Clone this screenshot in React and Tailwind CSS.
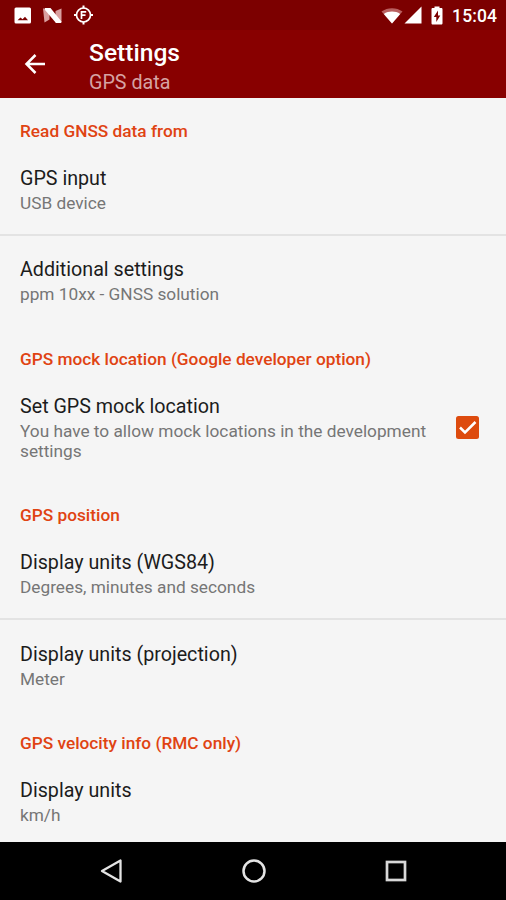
import React from "react";

const sections = [
  {
    title: "Read GNSS data from",
    items: [
      { title: "GPS input", summary: "USB device" },
      { title: "Additional settings", summary: "ppm 10xx - GNSS solution" },
    ],
  },
  {
    title: "GPS mock location (Google developer option)",
    items: [
      {
        title: "Set GPS mock location",
        summary: "You have to allow mock locations in the development settings",
        checked: true,
      },
    ],
  },
  {
    title: "GPS position",
    items: [
      { title: "Display units (WGS84)", summary: "Degrees, minutes and seconds" },
      { title: "Display units (projection)", summary: "Meter" },
    ],
  },
  {
    title: "GPS velocity info (RMC only)",
    items: [{ title: "Display units", summary: "km/h" }],
  },
];

const StatusBar = () => (
  <div className="flex h-[30px] shrink-0 items-center justify-between bg-[#7c0000] pl-[14px] pr-[9px] text-white">
    <div className="flex items-center gap-[11px]">
      <svg className="h-[17px] w-[18px]" viewBox="0 0 18 17">
        <path
          fill="#fff"
          fillRule="evenodd"
          d="M2 0.5h13.500a1.500 1.500 0 0 1 1.500 1.500v13a1.500 1.500 0 0 1-1.500 1.500H2A1.500 1.500 0 0 1 .5 15V2A1.500 1.500 0 0 1 2 .5zM3.500 13.200h10.500l-3-3.400-2.500 2.400-2-1.600z"
        />
      </svg>
      <svg className="h-[17px] w-[20px]" viewBox="0 0 20 17">
        <path fill="#d9a0a0" d="M0 1.500h6.500v11L1.500 15.500zM12.500 4l6-2.500v14h-6z" />
        <path fill="#fff" d="M2 1h5.500l11 13.500-.5 1.500h-5L2 3z" />
      </svg>
      <svg className="h-5 w-5" viewBox="0 0 20 20" fill="none" stroke="#fff">
        <circle cx="9.500" cy="10" r="7" strokeWidth="1.700" />
        <path strokeWidth="2" d="M9.500 .5v3M9.500 16.500v3M0 10h3M16 10h3" />
        <path strokeWidth="1.700" d="M7.500 14V6.800h4.700M7.500 10.200h4" />
      </svg>
    </div>
    <div className="flex items-center">
      <svg className="h-[17px] w-[22px]" viewBox="0 0 22 17">
        <path fill="#b96060" d="M0.500 4.500C6.500 0 15.500 0 21.500 4.500L11 16.500z" />
        <path fill="#fff" d="M2.800 7C7.500 3.800 14.500 3.800 19.200 7L11 16.500z" />
      </svg>
      <svg className="ml-px h-[18px] w-[18px]" viewBox="0 0 18 18">
        <path fill="#fff" d="M17.500 .5v17H.5z" />
      </svg>
      <svg className="ml-[9px] h-[19px] w-[12px]" viewBox="0 0 12 19">
        <path
          fill="#fff"
          d="M3.500 2V.5h5V2h1.700c.8 0 1.300.5 1.300 1.300v13.900c0 .8-.5 1.300-1.300 1.300H1.800C1 18.500.5 18 .5 17.200V3.300C.5 2.500 1 2 1.800 2z"
        />
        <path fill="#7c0000" d="M7 4.500L2.800 11h2.500v5l4-6.500H7z" />
      </svg>
      <span className="ml-[9px] pt-[3px] text-[17.5px] font-medium leading-none tracking-[0.1px]">15:04</span>
    </div>
  </div>
);

const Toolbar = () => (
  <div className="flex h-[68px] shrink-0 items-center bg-[#880000]">
    <svg
      className="ml-[23px] h-6 w-6"
      viewBox="0 0 24 24"
      fill="none"
      stroke="#fff"
      strokeWidth="2.500"
    >
      <path d="M22 12H4M12.500 3L3.500 12l9 9" />
    </svg>
    <div className="ml-[42px] pt-[7px]">
      <h1 className="text-[24.6px] font-medium leading-[30px] text-white">Settings</h1>
      <p className="text-[19.7px] leading-[29px] text-[#d6a3a3]">GPS data</p>
    </div>
  </div>
);

const Checkbox = () => (
  <svg className="mr-[27px] h-[23px] w-[23px] shrink-0" viewBox="0 0 23 23">
    <rect width="23" height="23" rx="2.500" fill="#dd4b0e" />
    <path fill="none" stroke="#fff" strokeWidth="2.500" d="M4 11.500l5 5L19.500 6" />
  </svg>
);

const Preference = ({ item, divider }) => (
  <div
    className={`flex shrink-0 items-center pl-5 pt-px ${item.checked ? "h-[111.3px]" : "h-[91.4px]"} ${
      divider ? "shadow-[0_1px_0_#e3e3e3,inset_0_-1px_0_#e3e3e3]" : ""
    }`}
  >
    <div className="flex-1 pr-6">
      <div className="text-[19.7px] leading-[25px] text-[#1c1c1c]">{item.title}</div>
      <div className="mt-[2px] text-[17.25px] leading-[20.3px] text-[#767676]">{item.summary}</div>
    </div>
    {item.checked && <Checkbox />}
  </div>
);

const NavBar = () => (
  <div className="flex h-[58px] shrink-0 items-center justify-between bg-black pl-[100px] pr-[98px]">
    <svg className="h-6 w-6" viewBox="0 0 24 24" fill="none" stroke="#e4e4e4" strokeWidth="2.300">
      <path strokeLinejoin="round" d="M20.500 1.500v21L2 12z" />
    </svg>
    <svg className="h-6 w-6" viewBox="0 0 24 24" fill="none" stroke="#e4e4e4" strokeWidth="2.500">
      <circle cx="12" cy="12" r="10.500" />
    </svg>
    <svg className="h-6 w-6" viewBox="0 0 24 24" fill="none" stroke="#d8d8d8" strokeWidth="2.700">
      <rect x="3" y="3" width="18" height="18" />
    </svg>
  </div>
);

export default function App() {
  return (
    <div className="flex h-[900px] w-[506px] flex-col overflow-hidden bg-[#f5f5f5] font-['Roboto',sans-serif]">
      <StatusBar />
      <Toolbar />
      <div className="flex min-h-0 flex-1 flex-col overflow-hidden">
        {sections.map((section) => (
          <React.Fragment key={section.title}>
            <h2 className="flex h-[45.2px] shrink-0 items-end pb-[2.400px] pl-5 text-[17.25px] font-medium leading-[20px] text-[#e04312]">
              {section.title}
            </h2>
            {section.items.map((item, i) => (
              <Preference key={item.title} item={item} divider={i < section.items.length - 1} />
            ))}
          </React.Fragment>
        ))}
      </div>
      <NavBar />
    </div>
  );
}
